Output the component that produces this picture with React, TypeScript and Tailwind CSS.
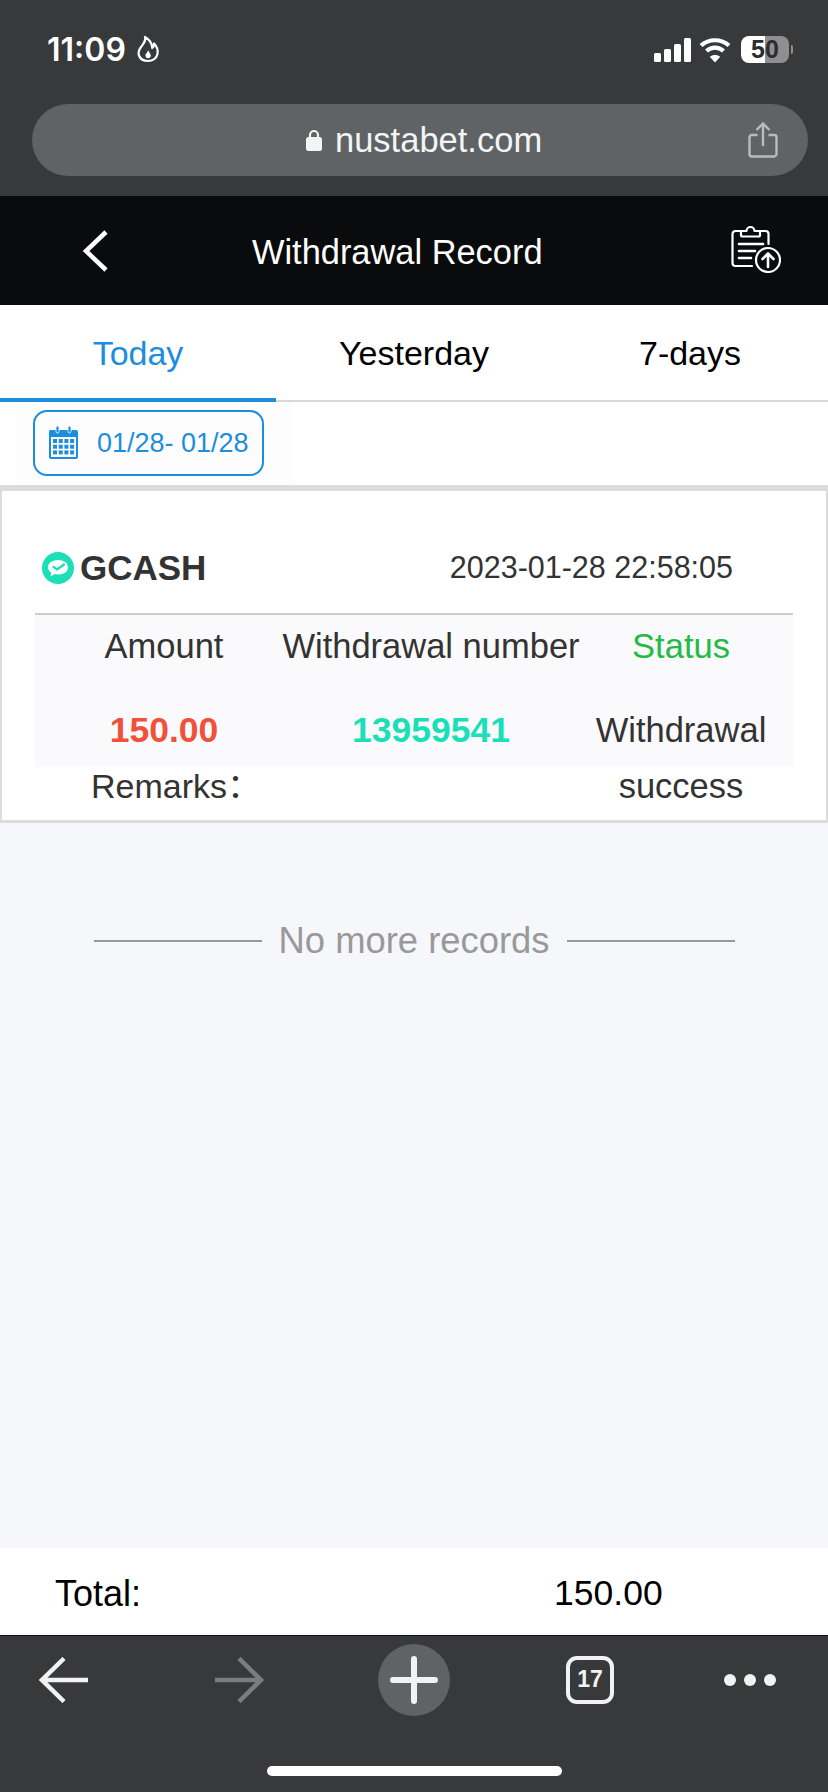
const sans = { fontFamily: '"Liberation Sans", Arial, sans-serif' };

function FlameIcon() {
  return (
    <svg width="24" height="28" viewBox="0 0 24 28" fill="none" stroke="#fff" strokeWidth="2.2" strokeLinejoin="round">
      <path d="M9 2c1 4 -1 6 -4 10c-2.500 3.500 -3 6 -2 8.500c1.300 3.500 4.800 5.500 9 5.500c4.500 0 8.500 -2.500 9.500 -7c0.800 -4 -1 -8 -3.500 -10.500c0 2 -0.500 3.500 -1.800 4.500c-0.200 -4.500 -2.700 -8.500 -7.200 -11z" />
      <path d="M12 15c0.500 2 -3 3.500 -2.500 6c0.300 1.500 1.400 2.300 2.700 2.300c1.500 0 2.600 -1 2.600 -2.500c0 -2.300 -1.800 -3.500 -2.800 -5.800z" fill="#fff" stroke="none" />
    </svg>
  );
}

function SignalIcon() {
  return (
    <svg width="38" height="24" viewBox="0 0 38 24" fill="#fff">
      <rect x="0" y="15" width="7" height="9" rx="1.500" />
      <rect x="10" y="11" width="7" height="13" rx="1.500" />
      <rect x="20" y="6" width="7" height="18" rx="1.500" />
      <rect x="30" y="0" width="7" height="24" rx="1.500" />
    </svg>
  );
}

function WifiIcon() {
  return (
    <svg width="32" height="26" viewBox="0 0 32 26" fill="none" stroke="#fff" strokeWidth="4.200">
      <path d="M2 8.500C9.800 1.500 22.200 1.500 30 8.500" />
      <path d="M7.500 14C12.500 9.600 19.500 9.600 24.500 14" />
      <path d="M16 25.500L10.800 19.800C13.800 17.400 18.200 17.400 21.200 19.800Z" fill="#fff" stroke="none" />
    </svg>
  );
}

function LockIcon() {
  return (
    <svg width="16" height="22" viewBox="0 0 16 22" fill="#f4f4f4">
      <path d="M4 9V6a4 4 0 0 1 8 0v3" fill="none" stroke="#f4f4f4" strokeWidth="2.200" />
      <rect x="0" y="8" width="16" height="14" rx="2.500" />
    </svg>
  );
}

function ShareIcon() {
  return (
    <svg width="30" height="36" viewBox="0 0 30 36" fill="none" stroke="#b9bcbd" strokeWidth="2.400">
      <path d="M15 24V2M8.500 8L15 1.500L21.500 8" />
      <path d="M9.500 13H3.500a2 2 0 0 0 -2 2V32a2.500 2.500 0 0 0 2.500 2.500H26a2.500 2.500 0 0 0 2.500 -2.500V15a2 2 0 0 0 -2 -2H20.500" />
    </svg>
  );
}

function RecordIcon() {
  return (
    <svg width="50" height="48" viewBox="0 0 50 48" fill="none" stroke="#fff" strokeWidth="2.200" strokeLinecap="round" strokeLinejoin="round">
      <path d="M10 6H4.500a3 3 0 0 0 -3 3V38a3 3 0 0 0 3 3H21" />
      <path d="M29 6H34.500a3 3 0 0 1 3 3V19" />
      <path d="M10 10V6H15.500a4 4 0 0 1 8 0H29V10a1.500 1.500 0 0 1 -1.500 1.500H11.500A1.500 1.500 0 0 1 10 10Z" />
      <path d="M8 19H32" strokeWidth="2.600" />
      <path d="M8 26H24" strokeWidth="2.600" />
      <path d="M8 33H20" strokeWidth="2.600" />
      <circle cx="37" cy="35" r="12" />
      <path d="M37 42V29M31.500 34L37 28.500L42.500 34" strokeWidth="2.600" />
    </svg>
  );
}

function CalendarIcon() {
  const cells = [0, 1, 2, 3];
  const rows = [0, 1, 2];
  return (
    <svg width="31" height="34" viewBox="0 0 31 34" fill="none">
      <path d="M2 4H28a2 2 0 0 1 2 2V31a2 2 0 0 1 -2 2H3a2 2 0 0 1 -2 -2V6a2 2 0 0 1 1 -2Z" fill="#1c8ddf" />
      <rect x="3" y="11" width="25" height="20" fill="#fff" />
      <rect x="8" y="0" width="3" height="7" rx="1.500" fill="#1c8ddf" stroke="#fff" strokeWidth="0.800" />
      <rect x="20" y="0" width="3" height="7" rx="1.500" fill="#1c8ddf" stroke="#fff" strokeWidth="0.800" />
      {rows.map((row) =>
        cells.map((cell) => (
          <rect key={`${row}-${cell}`} x={5 + cell * 5.700} y={13 + row * 5.700} width="4" height="4" fill="#1c8ddf" />
        ))
      )}
    </svg>
  );
}

function GcashLogo() {
  return (
    <svg width="32" height="32" viewBox="0 0 32 32">
      <circle cx="16" cy="16" r="16" fill="#1adfb8" />
      <path d="M6 15.500C6 10.800 10.500 8 16 8C21.500 8 26 10.800 26 15.500C26 20 21.500 22.500 16 22.500C14.800 22.500 13.700 22.400 12.700 22.100L8.500 24.500L9.200 20.600C7.200 19.300 6 17.600 6 15.500Z" fill="#fff" />
      <path d="M11.500 14.800L15 17.500L22 12.500" fill="none" stroke="#1adfb8" strokeWidth="2.200" strokeLinecap="round" strokeLinejoin="round" />
    </svg>
  );
}

export default function App() {
  return (
    <div className="flex h-[1792px] w-[828px] flex-col overflow-hidden bg-[#f6f7fb]" style={sans}>
      <div className="h-[196px] shrink-0 bg-[#38393b]">
        <div className="flex h-[104px] items-start pl-[47px] pr-[35px] pt-[32px]">
          <span className="text-[32px] font-semibold leading-[36px] text-white [font-family:Inter,sans-serif]">11:09</span>
          <span className="ml-[10px] mt-[3px]">
            <FlameIcon />
          </span>
          <div className="ml-auto flex items-center pt-[4px]">
            <SignalIcon />
            <span className="ml-[7px]">
              <WifiIcon />
            </span>
            <div className="ml-[10px] flex h-[27px] w-[48px] items-center justify-center rounded-[8px] bg-[linear-gradient(to_right,#fff_50%,#8f8f8f_50%)] text-[25px] font-bold leading-none text-[#2c2d2f]">
              50
            </div>
            <div className="ml-[2px] h-[9px] w-[2px] rounded-r bg-[#8f8f8f]" />
          </div>
        </div>
        <div className="ml-[32px] mr-[20px] flex h-[72px] items-center rounded-full bg-[#5f6366] pr-[30px]">
          <div className="ml-[274px] flex items-center text-[34.5px] leading-none text-[#f4f4f4]">
            <LockIcon />
            <span className="ml-[13px]">nustabet.com</span>
          </div>
          <span className="ml-auto">
            <ShareIcon />
          </span>
        </div>
      </div>

      <div className="flex h-[109px] shrink-0 items-center bg-[#0a0b0d] pl-[82px] pr-[47px] text-white">
        <svg width="26" height="42" viewBox="0 0 26 42" fill="none" stroke="#fff" strokeWidth="4.500">
          <path d="M24 2L4 21L24 40" />
        </svg>
        <span className="ml-[144px] pt-[3px] text-[34.4px] leading-none">Withdrawal Record</span>
        <span className="ml-auto -mt-[3px]">
          <RecordIcon />
        </span>
      </div>

      <div className="grid h-[97px] shrink-0 grid-cols-3 border-b-2 border-[#d9d9d9] bg-white pt-[2px] text-[34px] text-black">
        <div className="-mb-[2px] flex items-center justify-center border-b-4 border-[#1c8ddf] pt-[2px] text-[#1c8ddf]">Today</div>
        <div className="flex items-center justify-center">Yesterday</div>
        <div className="flex items-center justify-center">7-days</div>
      </div>

      <div className="h-[83px] shrink-0 bg-white pl-[16px]">
        <div className="h-full w-[277px] bg-[#fdfdfd] pl-[17px] pt-[8px]">
          <div className="flex h-[66px] w-[231px] items-center rounded-[14px] border-2 border-[#1c8ddf] pl-[13px] text-[27px] text-[#1c8ddf]">
            <CalendarIcon />
            <span className="ml-[18px] whitespace-nowrap">01/28- 01/28</span>
          </div>
        </div>
      </div>

      <div className="h-[338px] shrink-0 border-x-2 border-y-[6px] border-[#dcdcdc] border-b-[3px] bg-white">
        <div className="flex h-[122px] items-center pb-[5px] pl-[40px] pt-[36px]">
          <GcashLogo />
          <span className="ml-[6px] text-[35px] font-bold leading-none text-[#333]">GCASH</span>
          <span className="ml-auto pr-[93px] text-[30.5px] leading-none text-[#333]">2023-01-28 22:58:05</span>
        </div>
        <div className="mx-[33px] h-[154px] border-t-2 border-[#cccccc] bg-[#fafafc] pt-[2px]">
          <div className="grid grid-cols-[258px_276px_224px] text-center text-[34.5px] text-[#333]">
            <div className="flex h-[60px] items-center justify-center">Amount</div>
            <div className="flex h-[60px] items-center justify-center whitespace-nowrap">Withdrawal number</div>
            <div className="flex h-[60px] items-center justify-center text-[#22bb44]">Status</div>
            <div className="mt-[25px] text-[35.5px] font-bold leading-[56px] text-[#f1513a]">150.00</div>
            <div className="mt-[25px] text-[35.5px] font-bold leading-[56px] text-[#1adfb8]">13959541</div>
            <div className="mt-[25px] leading-[56px]">Withdrawal success</div>
          </div>
        </div>
        <div className="pl-[89px] text-[34px] leading-[38px] text-[#333] [font-family:'Liberation_Sans','Noto_Sans_CJK_SC',sans-serif]">Remarks：</div>
      </div>

      <div className="flex flex-1 items-start justify-center pt-[112px]">
        <div className="flex items-center text-[36.4px] leading-[12px] text-[#999]">
          <div className="h-[2px] w-[168px] bg-[#999]" />
          <span className="mx-[17px]">No more records</span>
          <div className="h-[2px] w-[168px] bg-[#999]" />
        </div>
      </div>

      <div className="flex h-[87px] shrink-0 items-center bg-white pl-[55px] pt-[4px] text-[36px] text-black">
        <span>Total:</span>
        <span className="ml-[413px] text-[35.5px]">150.00</span>
      </div>

      <div className="h-[157px] shrink-0 border-t border-[#111] bg-[#38393b]">
        <div className="grid h-[81px] grid-cols-[128px_222px_128px_222px_100px] items-center pt-[6px]">
          <div className="flex justify-center">
            <svg width="50" height="46" viewBox="0 0 50 46" fill="none" stroke="#f2f2f2" strokeWidth="4.500">
              <path d="M49 23H3M25 1.500L3 23L25 44.500" />
            </svg>
          </div>
          <div className="flex justify-center">
            <svg width="50" height="46" viewBox="0 0 50 46" fill="none" stroke="#7c7d7f" strokeWidth="4.500">
              <path d="M1 23H47M25 1.500L47 23L25 44.500" />
            </svg>
          </div>
          <div className="flex justify-center">
            <div className="flex h-[72px] w-[72px] items-center justify-center rounded-full bg-[#5f6366]">
              <svg width="48" height="48" viewBox="0 0 48 48" stroke="#f2f2f2" strokeWidth="6" strokeLinecap="round">
                <path d="M3 24H45M24 3V45" />
              </svg>
            </div>
          </div>
          <div className="flex justify-center pl-[2px]">
            <div className="flex h-[48px] w-[48px] items-center justify-center rounded-[11px] border-[4px] border-[#f2f2f2] text-[23px] font-bold leading-none text-[#f2f2f2]">
              17
            </div>
          </div>
          <div className="flex justify-center gap-[8px]">
            <div className="h-[12px] w-[12px] rounded-full bg-[#f2f2f2]" />
            <div className="h-[12px] w-[12px] rounded-full bg-[#f2f2f2]" />
            <div className="h-[12px] w-[12px] rounded-full bg-[#f2f2f2]" />
          </div>
        </div>
        <div className="ml-[267px] mt-[49px] h-[10px] w-[295px] rounded-full bg-white" />
      </div>
    </div>
  );
}
